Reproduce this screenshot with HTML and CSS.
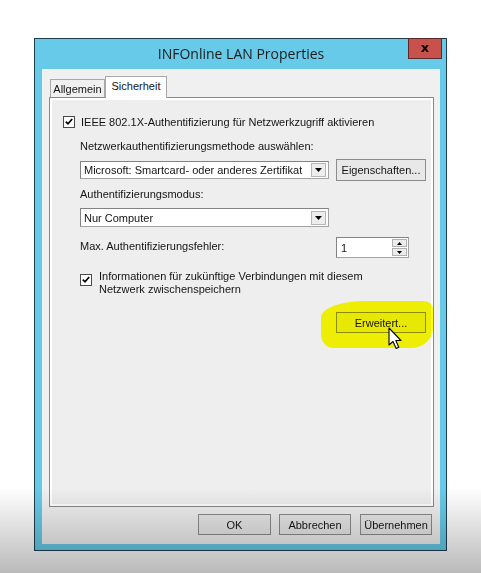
FILE: index.html
```html
<!DOCTYPE html>
<html lang="de">
<head>
<meta charset="utf-8">
<title>INFOnline LAN Properties</title>
<link rel="stylesheet" href="styles.css">
</head>
<body>
<div class="screen">
  <div class="window">
    <div class="titlebar">
      <span class="title">INFOnline LAN Properties</span>
      <div class="close">x</div>
    </div>
    <div class="client">
      <div class="tabs">
        <div class="tab">Allgemein</div>
        <div class="tab active">Sicherheit</div>
      </div>
      <div class="panel">
        <div class="check-row">
          <span class="cb"><svg width="10" height="10" viewBox="0 0 10 10"><path d="M1.8 4.6 L4 6.8 L8.2 2" fill="none" stroke="#000" stroke-width="1.7"/></svg></span>
          <span class="cb-text">IEEE 802.1X-Authentifizierung für Netzwerkzugriff aktivieren</span>
        </div>
        <div class="indent">
          <div class="label first">Netzwerkauthentifizierungsmethode auswählen:</div>
          <div class="row method">
            <div class="combo">
              <span class="combo-text">Microsoft: Smartcard- oder anderes Zertifikat</span>
              <span class="drop"><svg width="7" height="4" viewBox="0 0 7 4"><path d="M0 0 H7 L3.5 4 Z" fill="#000"/></svg></span>
            </div>
            <div class="btn props">Eigenschaften...</div>
          </div>
          <div class="label">Authentifizierungsmodus:</div>
          <div class="combo mode">
            <span class="combo-text">Nur Computer</span>
            <span class="drop"><svg width="7" height="4" viewBox="0 0 7 4"><path d="M0 0 H7 L3.5 4 Z" fill="#000"/></svg></span>
          </div>
          <div class="row spin-row">
            <span class="spin-label">Max. Authentifizierungsfehler:</span>
            <div class="spin">
              <span class="spin-val">1</span>
              <span class="spin-btns">
                <span class="spin-btn"><svg width="5" height="3" viewBox="0 0 5 3"><path d="M0 3 H5 L2.5 0 Z" fill="#000"/></svg></span>
                <span class="spin-btn"><svg width="5" height="3" viewBox="0 0 5 3"><path d="M0 0 H5 L2.5 3 Z" fill="#000"/></svg></span>
              </span>
            </div>
          </div>
          <div class="check-row cache">
            <span class="cb"><svg width="10" height="10" viewBox="0 0 10 10"><path d="M1.8 4.6 L4 6.8 L8.2 2" fill="none" stroke="#000" stroke-width="1.7"/></svg></span>
            <span class="cb-text">Informationen für zukünftige Verbindungen mit diesem<br>Netzwerk zwischenspeichern</span>
          </div>
          <div class="row adv-row">
            <div class="btn adv">Erweitert...</div>
          </div>
        </div>
      </div>
      <div class="footer">
        <div class="btn ok">OK</div>
        <div class="btn cancel">Abbrechen</div>
        <div class="btn apply">Übernehmen</div>
      </div>
    </div>
  </div>
  <div class="highlight"></div>
  <svg class="cursor" width="16" height="24" viewBox="0 0 16 24"><path d="M1 1 L1 18 L5 14.5 L8.2 21.5 L10.8 20.3 L7.8 13.5 L13 13.5 Z" fill="#fff" stroke="#000" stroke-width="1.1" stroke-linejoin="round"/></svg>
  <div class="shade"></div>
</div>
</body>
</html>
```
FILE: styles.css
```css
* { box-sizing: border-box; }

body {
  margin: 0;
  background: #ffffff;
  font-family: "Liberation Sans", Arial, sans-serif;
  font-size: 11px;
  color: #141414;
}

.screen {
  position: relative;
  width: 481px;
  height: 573px;
  overflow: hidden;
  padding: 38px 0 0 34px;
}

.window {
  position: relative;
  width: 413px;
  height: 513px;
  border: 1px solid #1f3f4c;
  background: #67cae8;
  padding: 0 6px 6px 7px;
  display: flex;
  flex-direction: column;
}

.titlebar {
  height: 30px;
  display: flex;
  align-items: center;
  justify-content: center;
  padding-bottom: 2px;
}

.title {
  font-family: "Open Sans", "Noto Sans", sans-serif;
  font-size: 14px;
  color: #1c1c1c;
}

.close {
  position: absolute;
  top: -1px;
  right: 4px;
  width: 34px;
  height: 21px;
  background: #c8514c;
  border: 1px solid #5a2a2a;
  color: #000;
  font-family: "DejaVu Sans", sans-serif;
  font-weight: bold;
  font-size: 13px;
  line-height: 17px;
  text-align: center;
}

.client {
  height: 475px;
  background: #f0f0f0;
  padding: 7px 6px 0 7px;
  display: flex;
  flex-direction: column;
}

.tabs {
  display: flex;
  align-items: flex-end;
  height: 21px;
  padding-left: 1px;
}

.tab {
  width: 55px;
  height: 18px;
  border: 1px solid #a9a9a9;
  border-bottom: none;
  background: #f0f0f0;
  line-height: 17px;
  text-align: center;
  padding-top: 1px;
}

.tab.active {
  position: relative;
  z-index: 1;
  width: 62px;
  height: 22px;
  margin-bottom: -1px;
  background: #ffffff;
  line-height: 18px;
  padding-top: 0;
}

.panel {
  height: 410px;
  border: 1px solid #8a8a8a;
  background: #eeeeee;
  box-shadow: inset 0 0 0 2px #ffffff;
  padding: 17px 0 0 13px;
}

.check-row {
  display: flex;
  align-items: flex-start;
  line-height: 14px;
}

.cb {
  width: 12px;
  height: 12px;
  margin-top: 1px;
  border: 1px solid #4a4a4a;
  background: #fff;
  display: flex;
  align-items: center;
  justify-content: center;
  flex: none;
}

.cb-text {
  margin-left: 6px;
}

.indent {
  padding-left: 17px;
}

.label {
  line-height: 14px;
  margin-top: 6px;
}

.label.first {
  margin-top: 10px;
}

.row {
  display: flex;
  align-items: center;
}

.method {
  margin-top: 6px;
  height: 22px;
}

.combo {
  width: 249px;
  height: 18px;
  border: 1px solid #a3a3a3;
  border-top-color: #828282;
  border-left-color: #828282;
  background: #ffffff;
  display: flex;
  align-items: center;
  justify-content: space-between;
  padding: 0 2px 0 3px;
}

.combo.mode {
  height: 19px;
  margin-top: 7px;
}

.combo-text {
  white-space: nowrap;
  overflow: hidden;
}

.drop {
  width: 15px;
  height: 14px;
  border: 1px solid #b5b5b5;
  background: #ededed;
  display: flex;
  align-items: center;
  justify-content: center;
  flex: none;
}

.btn {
  height: 21px;
  border: 1px solid #8c8c8c;
  background: #e8e8e8;
  display: flex;
  align-items: center;
  justify-content: center;
  color: #141414;
  white-space: nowrap;
}

.props {
  width: 90px;
  height: 22px;
  margin-left: 7px;
}

.spin-row {
  margin-top: 10px;
  height: 21px;
}

.spin-label {
  width: 256px;
  margin-top: -4px;
}

.spin {
  width: 73px;
  height: 21px;
  border: 1px solid #a3a3a3;
  border-top-color: #828282;
  border-left-color: #828282;
  background: #fff;
  display: flex;
  align-items: center;
  justify-content: space-between;
  padding: 1px 1px 1px 4px;
}

.spin-btns {
  display: flex;
  flex-direction: column;
  gap: 1px;
  height: 17px;
}

.spin-btn {
  width: 15px;
  height: 8px;
  border: 1px solid #b0b0b0;
  background: #ececec;
  display: flex;
  align-items: center;
  justify-content: center;
}

.cache {
  margin-top: 12px;
  line-height: 13px;
}

.cache .cb {
  margin-top: 4px;
}

.cache .cb-text {
  margin-left: 7px;
}

.adv-row {
  margin-top: 16px;
}

.adv {
  width: 90px;
  margin-left: 256px;
}

.footer {
  display: flex;
  justify-content: flex-end;
  gap: 8px;
  padding: 7px 2px 0 0;
}

.ok { width: 73px; }
.cancel { width: 72px; }
.apply { width: 72px; margin-left: 1px; }

.highlight {
  position: absolute;
  left: 321px;
  top: 301px;
  width: 112px;
  height: 47px;
  background: #ffff05;
  mix-blend-mode: multiply;
  border-radius: 44px 10px 22px 12px / 16px 8px 20px 14px;
  pointer-events: none;
}

.cursor {
  position: absolute;
  left: 388px;
  top: 327px;
}

.shade {
  position: absolute;
  left: 0;
  right: 0;
  bottom: 0;
  height: 85px;
  background: linear-gradient(to bottom, rgba(0,0,0,0), rgba(0,0,0,0.27));
  pointer-events: none;
}
```
